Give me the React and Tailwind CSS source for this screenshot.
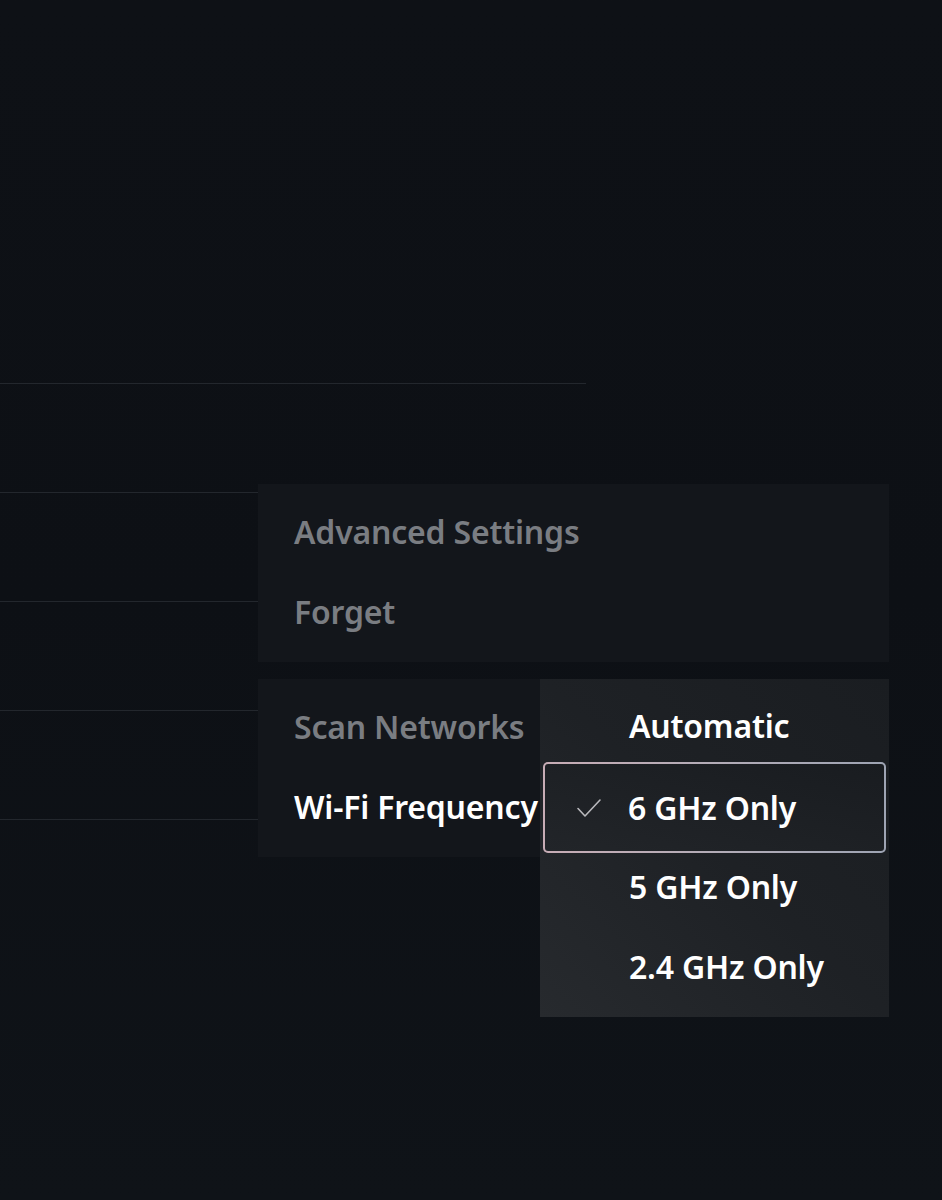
import React from "react";

const font = { fontFamily: '"Noto Sans", "Open Sans", sans-serif' };

function Check() {
  return (
    <svg width="26" height="22" viewBox="0 0 26 22" fill="none">
      <path d="M2 11.5 L9 19 L24 3" stroke="#b9b9bd" strokeWidth="1.6" strokeLinecap="round" strokeLinejoin="round" />
    </svg>
  );
}

export default function App() {
  const lines = [0, 1, 2, 3, 4];
  return (
    <div
      className="relative w-[942px] h-[1200px] overflow-hidden bg-gradient-to-b from-[#0e1116] via-[#0d1015] to-[#0f1318]"
      style={font}
    >
      {/* underlying list */}
      <div className="flex flex-col pt-[383px] w-[586px]">
        {lines.map((i) => (
          <div key={i} className="h-[109px] border-t border-[#23272d]" />
        ))}
      </div>

      {/* menu panel 1 */}
      <div className="absolute left-[258px] top-[484px] w-[631px] h-[178px] bg-[#13161b] pt-[8px] flex flex-col">
        <div className="h-[80px] flex items-center pl-[36px] text-[32px] font-semibold tracking-[-0.2px] text-[#7a7d82]">
          Advanced Settings
        </div>
        <div className="h-[80px] flex items-center pl-[36px] text-[32px] font-semibold tracking-[-0.2px] text-[#7a7d82]">
          Forget
        </div>
      </div>

      {/* menu panel 2 */}
      <div className="absolute left-[258px] top-[679px] w-[282px] h-[178px] bg-[#13161b] pt-[8px] flex flex-col">
        <div className="h-[80px] flex items-center pl-[36px] text-[32px] font-semibold tracking-[-0.2px] text-[#7a7d82] whitespace-nowrap">
          Scan Networks
        </div>
        <div className="h-[80px] flex items-center pl-[36px] text-[32px] font-semibold tracking-[-0.2px] text-white whitespace-nowrap">
          Wi-Fi Frequency
        </div>
      </div>

      {/* dropdown */}
      <div className="absolute left-[540px] top-[679px] w-[349px] h-[338px] bg-gradient-to-tr from-[#272a2e] via-[#1e2125] to-[#1a1d21] pt-[7px] px-[3px] flex flex-col">
        <div className="h-[80px] flex items-center pl-[86px] text-[32px] font-semibold tracking-[-0.2px] text-white">
          Automatic
        </div>
        <div className="h-[91px] -mt-[4px] rounded-[5px] p-[2px] bg-gradient-to-r from-[#c8adb6] via-[#b3acb7] to-[#9ea4b3]">
          <div className="h-full rounded-[3px] bg-gradient-to-tr from-[#222529] to-[#191c20] flex items-center pl-[31px]">
            <Check />
            <span className="ml-[26px] text-[32px] font-semibold tracking-[-0.2px] text-white">6 GHz Only</span>
          </div>
        </div>
        <div className="h-[80px] -mt-[6px] flex items-center pl-[86px] text-[32px] font-semibold tracking-[-0.2px] text-white">
          5 GHz Only
        </div>
        <div className="h-[80px] flex items-center pl-[86px] text-[32px] font-semibold tracking-[-0.2px] text-white">
          2.4 GHz Only
        </div>
      </div>
    </div>
  );
}
